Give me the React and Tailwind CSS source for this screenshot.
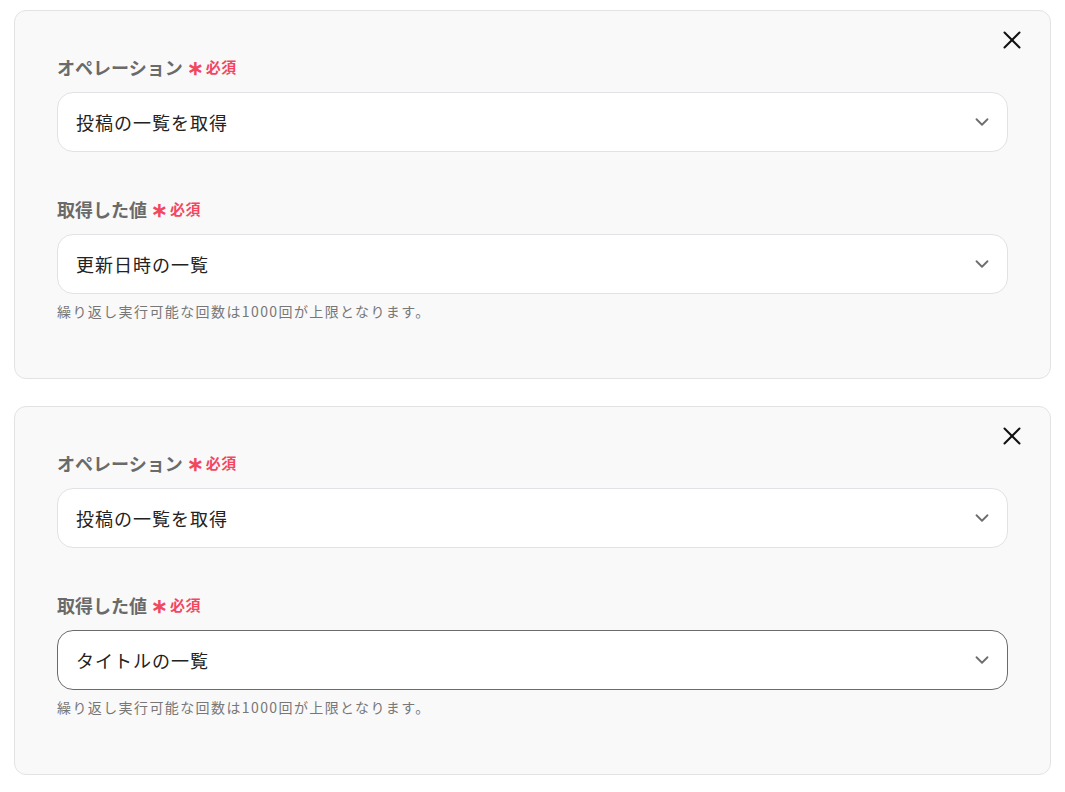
import { ChevronDown, X } from 'lucide-react';

const Field = ({ label, value, focused, hint }) => (
  <div>
    <div className="flex h-[26px] items-center">
      <span className="text-[18px] font-bold text-[#6a6a6a]">{label}</span>
      <span className="ml-[4px] text-[20px] font-bold leading-none text-[#f2475f]">∗</span>
      <span className="ml-[2px] text-[15px] font-bold tracking-[0.04em] text-[#f2475f]">必須</span>
    </div>
    <div
      className={`mt-3 flex h-[60px] items-center justify-between rounded-[16px] bg-white pl-[18px] pr-[14px] ${
        focused ? 'border border-[#6b6b6b]' : 'border border-[#e2e2e6]'
      }`}
    >
      <span className="text-[18px] tracking-[1px] text-[#222]">{value}</span>
      <ChevronDown size={22} strokeWidth={2} className="text-[#6e6e6e]" />
    </div>
    {hint && (
      <p className="mt-2 text-[14px] leading-[18px] tracking-[1.4px] text-[#777]">{hint}</p>
    )}
  </div>
);

const Card = ({ focused }) => (
  <div className="relative rounded-[12px] border border-[#e3e3e3] bg-[#f9f9f9] px-[42px] pb-[58px] pt-[43px]">
    <button className="absolute right-[23px] top-[14px] text-[#111]">
      <X size={30} strokeWidth={1.6} />
    </button>
    <Field label="オペレーション" value="投稿の一覧を取得" />
    <div className="mt-[44px]">
      <Field
        label="取得した値"
        value={focused ? 'タイトルの一覧' : '更新日時の一覧'}
        focused={focused}
        hint="繰り返し実行可能な回数は1000回が上限となります。"
      />
    </div>
  </div>
);

export default function App() {
  return (
    <div
      className="min-h-screen bg-white px-[14px] pt-[10px]"
      style={{ fontFamily: '"Noto Sans CJK JP", "Noto Sans", sans-serif' }}
    >
      <div className="flex flex-col gap-[27px]">
        <Card />
        <Card focused />
      </div>
    </div>
  );
}
